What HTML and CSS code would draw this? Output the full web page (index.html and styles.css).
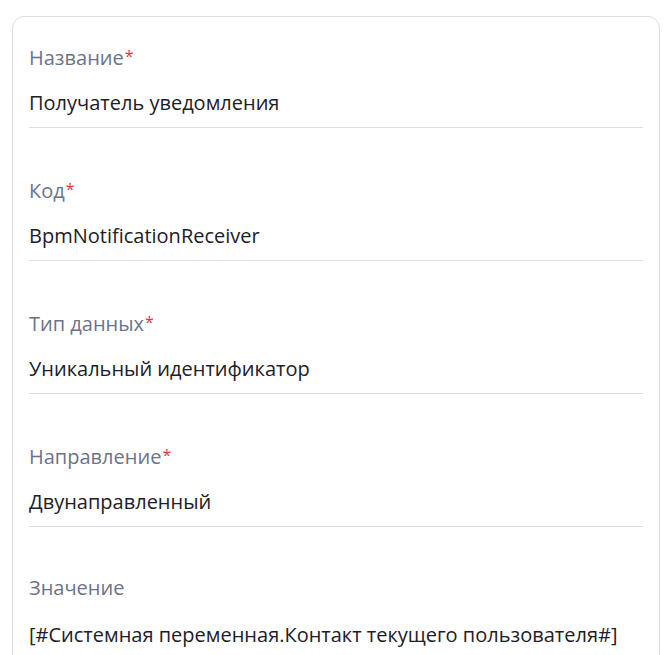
FILE: index.html
```html
<!DOCTYPE html>
<html lang="ru">
<head>
<meta charset="utf-8">
<link rel="stylesheet" href="styles.css">
</head>
<body>
<div class="card">
  <div class="field">
    <div class="label">Название<span class="req">*</span></div>
    <div class="value">Получатель уведомления</div>
  </div>
  <div class="field">
    <div class="label">Код<span class="req">*</span></div>
    <div class="value">BpmNotificationReceiver</div>
  </div>
  <div class="field">
    <div class="label">Тип данных<span class="req">*</span></div>
    <div class="value">Уникальный идентификатор</div>
  </div>
  <div class="field">
    <div class="label">Направление<span class="req">*</span></div>
    <div class="value">Двунаправленный</div>
  </div>
  <div class="field">
    <div class="label">Значение</div>
    <div class="value">[#Системная переменная.Контакт текущего пользователя#]</div>
  </div>
</div>
</body>
</html>
```
FILE: styles.css
```css
html, body {
  margin: 0;
  padding: 0;
  background: #ffffff;
}
body {
  font-family: "Open Sans", "Noto Sans", sans-serif;
  padding: 16px 7px 0 12px;
  height: 655px;
  overflow: hidden;
  box-sizing: border-box;
}
.card {
  border: 1px solid #dcdde4;
  border-radius: 12px;
  padding: 25px 16px 40px 16px;
  display: flex;
  flex-direction: column;
  gap: 47px;
}
.field {
  display: flex;
  flex-direction: column;
  gap: 19px;
}
.label {
  color: #6b7389;
  font-size: 20px;
  line-height: 28px;
  height: 28px;
}
.req {
  color: #e8343a;
  font-size: 16px;
  margin-left: 1px;
  vertical-align: 3px;
}
.value {
  color: #1e2026;
  font-size: 20px;
  line-height: 28px;
  padding: 0 0 10px 0;
  border-bottom: 1px solid #dcdde4;
}
```
